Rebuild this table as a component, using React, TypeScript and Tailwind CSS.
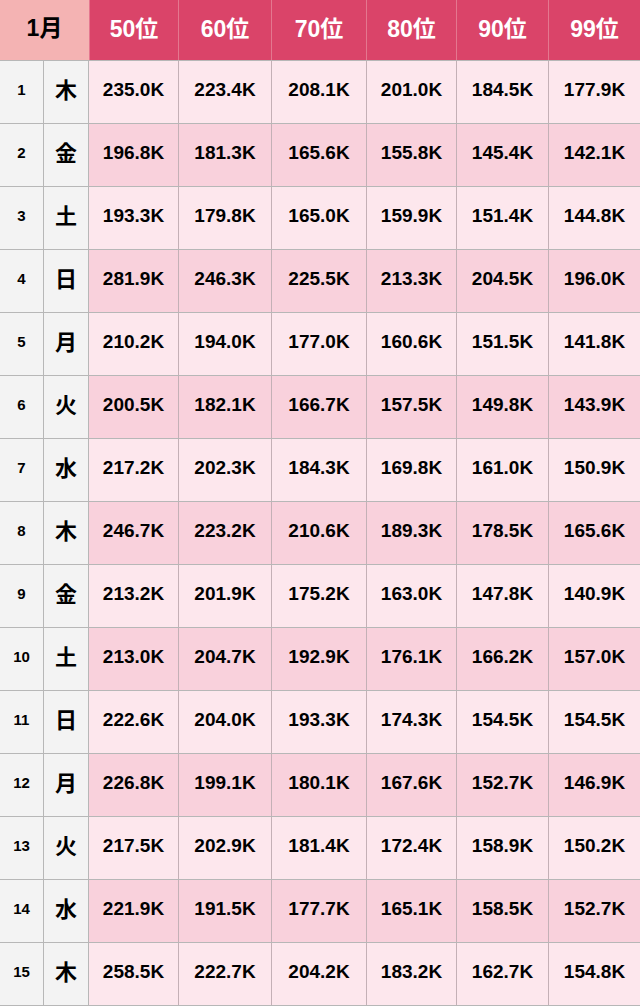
const rows: [number, string, string[]][] = [
  [1, '木', ['235.0K', '223.4K', '208.1K', '201.0K', '184.5K', '177.9K']],
  [2, '金', ['196.8K', '181.3K', '165.6K', '155.8K', '145.4K', '142.1K']],
  [3, '土', ['193.3K', '179.8K', '165.0K', '159.9K', '151.4K', '144.8K']],
  [4, '日', ['281.9K', '246.3K', '225.5K', '213.3K', '204.5K', '196.0K']],
  [5, '月', ['210.2K', '194.0K', '177.0K', '160.6K', '151.5K', '141.8K']],
  [6, '火', ['200.5K', '182.1K', '166.7K', '157.5K', '149.8K', '143.9K']],
  [7, '水', ['217.2K', '202.3K', '184.3K', '169.8K', '161.0K', '150.9K']],
  [8, '木', ['246.7K', '223.2K', '210.6K', '189.3K', '178.5K', '165.6K']],
  [9, '金', ['213.2K', '201.9K', '175.2K', '163.0K', '147.8K', '140.9K']],
  [10, '土', ['213.0K', '204.7K', '192.9K', '176.1K', '166.2K', '157.0K']],
  [11, '日', ['222.6K', '204.0K', '193.3K', '174.3K', '154.5K', '154.5K']],
  [12, '月', ['226.8K', '199.1K', '180.1K', '167.6K', '152.7K', '146.9K']],
  [13, '火', ['217.5K', '202.9K', '181.4K', '172.4K', '158.9K', '150.2K']],
  [14, '水', ['221.9K', '191.5K', '177.7K', '165.1K', '158.5K', '152.7K']],
  [15, '木', ['258.5K', '222.7K', '204.2K', '183.2K', '162.7K', '154.8K']],
];

const ranks = ['50位', '60位', '70位', '80位', '90位', '99位'];
// widths of the six value columns, including their right border
const colW = ['w-[90px]', 'w-[93px]', 'w-[95px]', 'w-[90px]', 'w-[92px]', 'w-[91px]'];

const font = { fontFamily: '"Liberation Sans", "Noto Sans CJK JP", Arial, sans-serif' };

export default function App() {
  return (
    <div className="w-[640px] bg-white text-black" style={font}>
      <div className="flex h-[61px] border-b border-[#b7b7b7]">
        <div className="w-[89px] flex items-center justify-center bg-[#f4b3b3] text-[23px] font-bold pb-[4px]">
          1月
        </div>
        {ranks.map((r, i) => (
          <div
            key={r}
            className={`${colW[i]} flex items-center justify-center bg-[#da4469] text-white text-[23px] font-bold pb-[2px] ${
              i === 0 ? 'border-l border-[#c9c9c9]' : ''
            } ${i < ranks.length - 1 ? 'border-r border-[#e4778f]' : ''}`}
          >
            {r}
          </div>
        ))}
      </div>
      {rows.map(([day, wd, vals], ri) => (
        <div key={day} className="flex h-[63px] border-b border-[#b7b7b7]">
          <div className="w-[44px] border-r border-[#b7b7b7] bg-[#f3f3f3] flex items-center justify-center text-[15px] font-bold pb-[3px]">
            {day}
          </div>
          <div className="w-[45px] border-r border-[#b7b7b7] bg-[#f3f3f3] flex items-center justify-center text-[22px] font-bold pb-[3px]">
            {wd}
          </div>
          {vals.map((v, i) => (
            <div
              key={i}
              className={`${colW[i]} flex items-center justify-center text-[19px] font-bold pb-[4px] ${
                ri % 2 === 0 ? 'bg-[#fde7ed]' : 'bg-[#f9d1dc]'
              } ${i < vals.length - 1 ? 'border-r border-[#c4b0b6]' : ''}`}
            >
              {v}
            </div>
          ))}
        </div>
      ))}
    </div>
  );
}
